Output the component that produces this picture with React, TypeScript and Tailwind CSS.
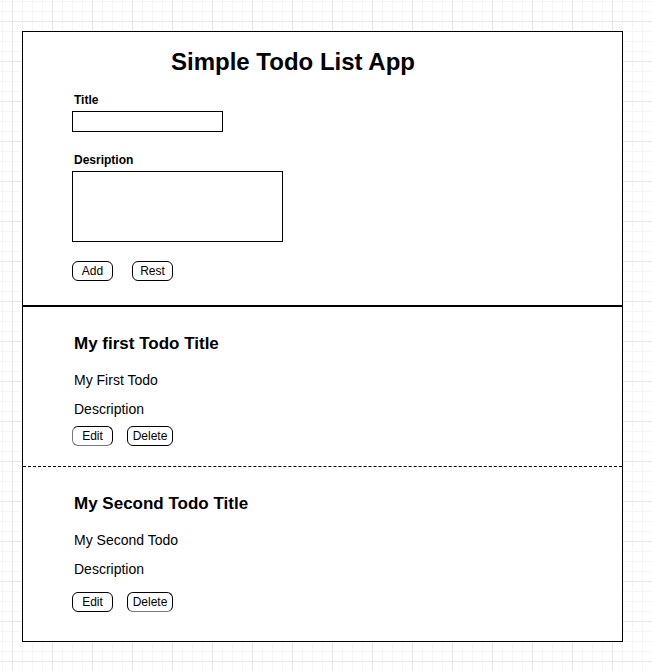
import React from "react";

type Todo = {
  id: number;
  title: string;
  text: string;
  description: string;
  gap: string;
  pressed: "edit" | "delete";
};

const todos: Todo[] = [
  {
    id: 1,
    title: "My first Todo Title",
    text: "My First Todo",
    description: "Description",
    gap: "mt-[9px]",
    pressed: "edit",
  },
  {
    id: 2,
    title: "My Second Todo Title",
    text: "My Second Todo",
    description: "Description",
    gap: "mt-[15px]",
    pressed: "delete",
  },
];

const btn =
  "h-[20px] rounded-[6px] border border-black bg-white text-[12px] leading-[18px] text-black";

export default function App() {
  return (
    <div className="min-h-screen w-full overflow-hidden bg-white bg-[linear-gradient(to_right,#e6e6e6_1px,transparent_1px),linear-gradient(to_bottom,#e6e6e6_1px,transparent_1px),linear-gradient(to_right,#f5f5f5_1px,transparent_1px),linear-gradient(to_bottom,#f5f5f5_1px,transparent_1px)] bg-[size:40px_40px,40px_40px,10px_10px,10px_10px] bg-[position:12px_21px,12px_21px,2px_1px,2px_1px] pt-[31px] font-['Liberation_Sans',Arial,sans-serif] text-black">
      <div className="ml-[22px] h-[611px] w-[601px] border border-black bg-white">
        {/* form */}
        <div className="flex h-[275px] flex-col border-b-2 border-black pt-[16px]">
          <h1 className="ml-[148px] text-[24px] font-bold leading-[28px]">
            Simple Todo List App
          </h1>
          <label className="ml-[51px] mt-[17px] text-[12px] font-bold leading-[14px]">
            Title
          </label>
          <input
            className="ml-[49px] mt-[4px] h-[21px] w-[151px] border border-black outline-none"
            type="text"
          />
          <label className="ml-[51px] mt-[21px] text-[12px] font-bold leading-[14px]">
            Desription
          </label>
          <textarea className="ml-[49px] mt-[4px] h-[71px] w-[211px] resize-none border border-black outline-none" />
          <div className="ml-[49px] mt-[19px] flex gap-[19px]">
            <button className={`${btn} w-[41px]`}>Add</button>
            <button className={`${btn} w-[41px]`}>Rest</button>
          </div>
        </div>

        {/* todos */}
        {todos.map((todo, i) => (
          <div
            key={todo.id}
            className={`flex flex-col pl-[51px] pt-[27px] ${
              i === 0 ? "h-[160px] border-b border-dashed border-black" : ""
            }`}
          >
            <h2 className="text-[17px] font-bold leading-[20px]">{todo.title}</h2>
            <p className="mt-[18px] text-[14px] leading-[16px]">{todo.text}</p>
            <p className="mt-[13px] text-[14px] leading-[16px]">
              {todo.description}
            </p>
            <div className={`-ml-[2px] flex gap-[14px] ${todo.gap}`}>
              <button
                className={`${btn} w-[41px] ${
                  todo.pressed === "edit" ? "border-b-[#777] border-l-[#777]" : ""
                }`}
              >
                Edit
              </button>
              <button
                className={`${btn} w-[46px] ${
                  todo.pressed === "delete" ? "border-b-[#777]" : ""
                }`}
              >
                Delete
              </button>
            </div>
          </div>
        ))}
      </div>
    </div>
  );
}
